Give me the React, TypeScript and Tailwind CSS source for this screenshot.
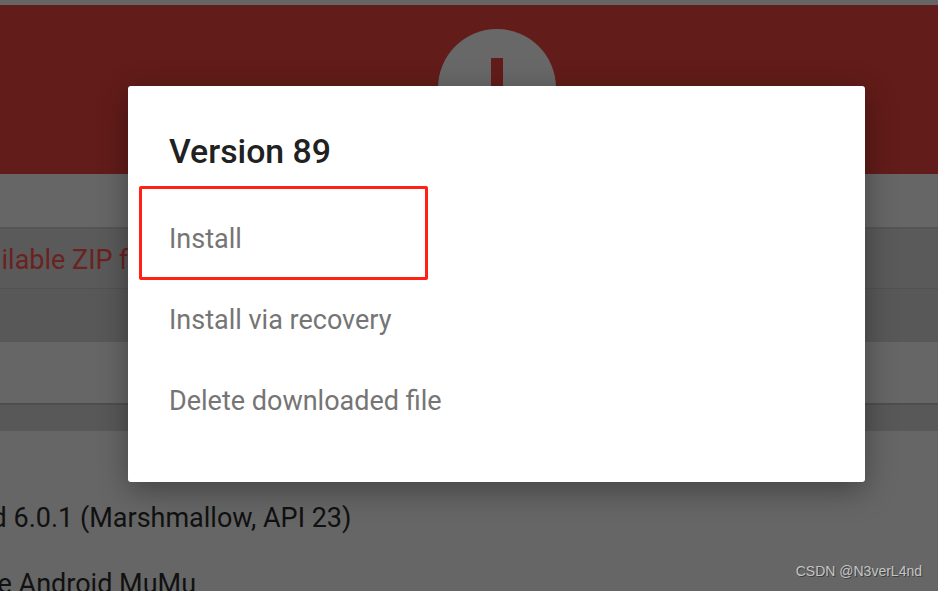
const roboto = { fontFamily: "Roboto, sans-serif" };

const ACTIONS = ["Install", "Install via recovery", "Delete downloaded file"];

function Background() {
  return (
    <div className="flex h-full w-full flex-col bg-[#666666]">
      <div className="h-[5px] shrink-0 bg-[#666666]" />
      <div className="flex h-[169px] shrink-0 justify-center bg-[#621c19] pl-[56px] pt-[24px]">
        <div className="flex h-[118px] w-[118px] justify-center rounded-full bg-[#686868] pt-[29px]">
          <div className="h-[60px] w-[12px] bg-[#621c19]" />
        </div>
      </div>
      <div className="h-[53px] shrink-0 bg-[#666666]" />
      <div className="flex h-[61px] shrink-0 items-center overflow-hidden border-t-2 border-[#555555] bg-[#5a5a5a] pt-[4px]">
        <span className="ml-[-43px] whitespace-nowrap text-[27px] text-[#6a2220]">Available ZIP files</span>
      </div>
      <div className="h-[54px] shrink-0 border-t border-[#525252] bg-[#585858]" />
      <div className="h-[61px] shrink-0 bg-[#666666]" />
      <div className="h-[28px] shrink-0 border-t-2 border-[#4e4e4e] bg-[#585858]" />
      <div className="flex flex-col gap-[32px] pt-[70px] text-[27px] leading-[34px] text-[#111111]">
        <span className="ml-[-87px] whitespace-nowrap">Android 6.0.1 (Marshmallow, API 23)</span>
        <span className="ml-[-9px] whitespace-nowrap">le Android MuMu</span>
      </div>
    </div>
  );
}

export default function App() {
  return (
    <div className="relative h-[591px] w-[938px] overflow-hidden" style={roboto}>
      <Background />

      <div className="absolute left-[128px] top-[86px] h-[396px] w-[737px] rounded-[3px] bg-white pl-[41px] pt-[45px] shadow-[0_8px_30px_rgba(0,0,0,0.35)]">
        <h2 className="text-[33.8px] font-medium leading-[42px] text-[#212121]">Version 89</h2>
        <div className="mt-[49px] flex flex-col gap-[47px]">
          {ACTIONS.map((a) => (
            <div key={a} className="text-[27px] leading-[34px] text-[#757575]">
              {a}
            </div>
          ))}
        </div>
      </div>

      {/* annotation drawn on top of the screenshot */}
      <div className="absolute left-[139px] top-[186px] h-[94px] w-[289px] rounded-[2px] border-[3px] border-[#ff2016]" />

      <div className="absolute bottom-[9px] right-[16px] font-['Liberation_Sans',sans-serif] text-[14px] text-[#c4c4c4] [text-shadow:1px_1px_0_#3f3f3f]">
        CSDN @N3verL4nd
      </div>
    </div>
  );
}
